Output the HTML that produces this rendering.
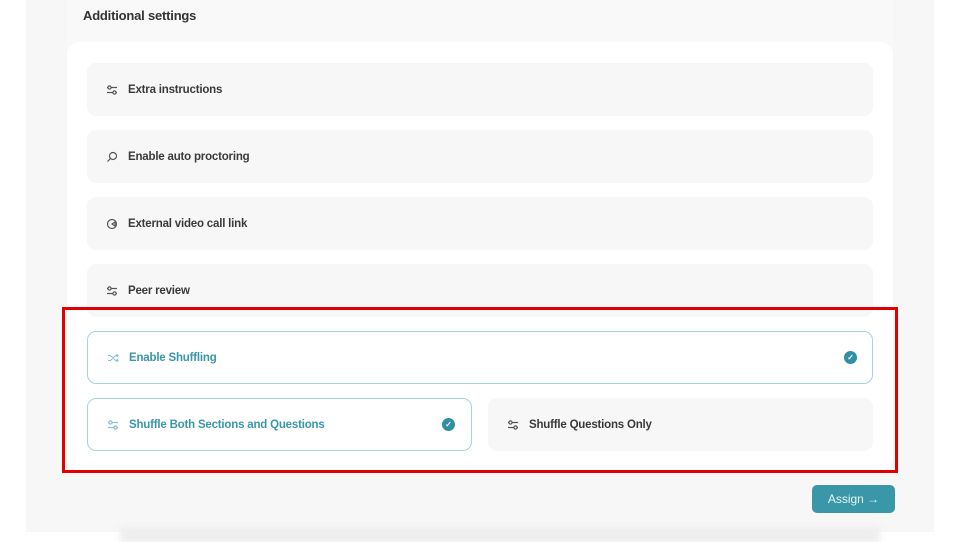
<!DOCTYPE html>
<html><head><style>
*{margin:0;padding:0;box-sizing:border-box}
body{width:960px;height:540px;background:#fff;font-family:"Liberation Sans",sans-serif;position:relative;overflow:hidden}
.outer{position:absolute;left:26px;top:0;width:908px;height:532px;background:#f7f7f7}
.inner{position:absolute;left:67px;top:0;width:826px;height:470px;background:#f9f9f9}
.title{position:absolute;left:83px;top:8px;font-size:13px;color:#333;font-weight:bold;letter-spacing:-0.2px}
.card{position:absolute;left:67px;top:42px;width:826px;height:428px;background:#fff;border-radius:12px}
.row{position:absolute;height:53px;border-radius:9px;background:#f7f7f7;display:flex;align-items:center;padding-left:19px;font-size:11.5px;color:#3a3a3a;font-weight:bold;letter-spacing:-0.2px}
.row svg{width:12px;height:12px;margin-right:10px;flex:none}
.sel{background:#fff;border:1px solid #a9d3da;color:#3a97a8}
.chk{position:absolute;width:13px;height:13px;border-radius:50%;background:#2f8fa3;color:#fff;font-size:8px;line-height:13px;text-align:center}
.red{position:absolute;left:62px;top:307px;width:836px;height:166px;border:3px solid #e00000}
.btn{position:absolute;left:812px;top:485px;width:83px;height:28px;background:#3a97a8;border-radius:5px;color:#e8f5f7;font-size:12px;line-height:28px;text-align:center}
.shadow{position:absolute;left:120px;top:528px;width:760px;height:14px;background:#ececec;filter:blur(4px)}
</style></head><body>
<svg width="0" height="0" style="position:absolute">
<defs>
<g id="sl" fill="none" stroke-width="1.2"><line x1="1" y1="3.5" x2="11" y2="3.5"/><circle cx="3.5" cy="3.5" r="1.6" fill="#fff"/><line x1="1" y1="8.5" x2="11" y2="8.5"/><circle cx="8.5" cy="8.5" r="1.6" fill="#fff"/></g>
</defs></svg>
<div class="outer"></div>
<div class="inner"></div>
<div class="title">Additional settings</div>
<div class="card"></div>
<div class="row" style="left:87px;top:63px;width:786px"><svg viewBox="0 0 12 12" stroke="#555"><use href="#sl"/></svg>Extra instructions</div>
<div class="row" style="left:87px;top:130px;width:786px"><svg viewBox="0 0 12 12" fill="none" stroke="#555" stroke-width="1.2"><circle cx="7" cy="5" r="3.5"/><line x1="4.5" y1="7.5" x2="1.5" y2="10.5"/></svg>Enable auto proctoring</div>
<div class="row" style="left:87px;top:197px;width:786px"><svg viewBox="0 0 12 12" fill="none" stroke="#555" stroke-width="1.2"><circle cx="6" cy="6" r="4.5"/><path d="M6 6 L9 4 L9 8 Z"/></svg>External video call link</div>
<div class="row" style="left:87px;top:264px;width:786px"><svg viewBox="0 0 12 12" stroke="#555"><use href="#sl"/></svg>Peer review</div>
<div class="row sel" style="left:87px;top:331px;width:786px"><svg viewBox="0 0 12 12" fill="none" stroke="#8cc2cc" stroke-width="1.1"><path d="M1 3.5h2.5l5 5H11M1 8.5h2.5l5-5H11M9.5 2l1.5 1.5-1.5 1.5M9.5 7l1.5 1.5-1.5 1.5"/></svg>Enable Shuffling<span class="chk" style="left:756px;top:19px">✓</span></div>
<div class="row sel" style="left:87px;top:398px;width:385px"><svg viewBox="0 0 12 12" stroke="#8cc2cc"><use href="#sl"/></svg>Shuffle Both Sections and Questions<span class="chk" style="left:354px;top:19px">✓</span></div>
<div class="row" style="left:488px;top:398px;width:385px"><svg viewBox="0 0 12 12" stroke="#555"><use href="#sl"/></svg>Shuffle Questions Only</div>
<div class="red"></div>
<div class="btn">Assign →</div>
<div class="shadow"></div>
</body></html>
